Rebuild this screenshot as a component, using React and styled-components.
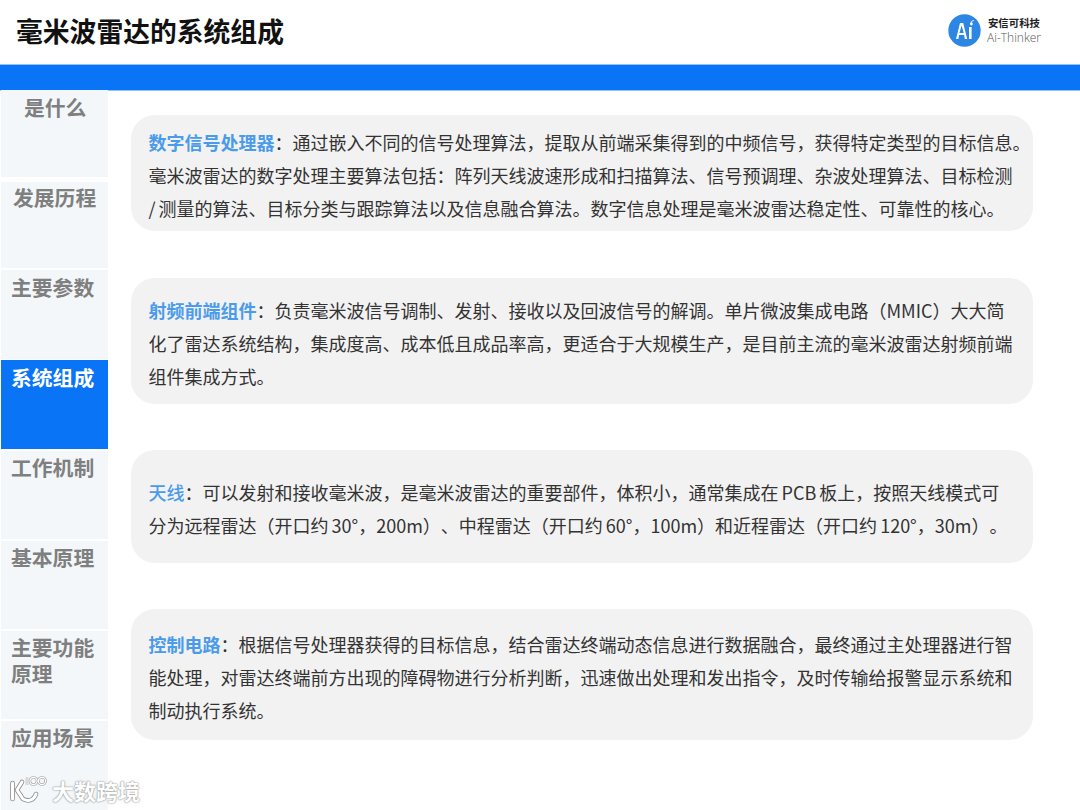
import React from 'react';
import styled, { createGlobalStyle } from 'styled-components';

const GlobalStyle = createGlobalStyle`
  html, body {
    margin: 0;
    padding: 0;
    background: #fff;
    font-family: 'Noto Sans CJK SC', 'Noto Sans', sans-serif;
    text-spacing-trim: space-all;
  }
`;

const Page = styled.div`
  position: relative;
  width: 1080px;
  height: 810px;
  overflow: hidden;
  background: #fff;
`;

const Header = styled.header`
  display: flex;
  align-items: center;
  justify-content: space-between;
  height: 64px;
  padding: 0 39px 3px 16px;
  box-sizing: border-box;
`;

const Title = styled.h1`
  margin: 0;
  font-size: 26.8px;
  font-weight: 700;
  color: #111;
`;

const Brand = styled.div`
  display: flex;
  align-items: center;
  gap: 6px;
`;

const BrandText = styled.div`
  display: flex;
  flex-direction: column;
  gap: 2px;
`;

const BrandName = styled.span`
  margin-left: 1px;
  font-size: 10.4px;
  line-height: 13px;
  font-weight: 700;
  color: #222;
`;

const BrandLatin = styled.span`
  font-family: 'Open Sans', sans-serif;
  font-size: 12px;
  line-height: 14px;
  font-weight: 300;
  color: #555;
`;

const BlueBar = styled.div`
  height: 26px;
  background: #0a74f6;
  border-top: 1px solid #8cc4fb;
  box-shadow: 0 1px 0 #8cc4fb;
  box-sizing: border-box;
`;

const Body = styled.div`
  display: flex;
`;

const Sidebar = styled.nav`
  display: flex;
  flex-direction: column;
  gap: 1.8px;
  width: 107px;
  margin-left: 1px;
  flex-shrink: 0;
`;

const Tab = styled.div`
  height: ${(p) => p.$h}px;
  margin-top: ${(p) => p.$mt}px;
  box-sizing: border-box;
  padding-top: ${(p) => p.$pt}px;
  padding-left: ${(p) => p.$pl}px;
  background: ${(p) => (p.$active ? '#0a74f6' : '#f3f7fa')};
  color: ${(p) => (p.$active ? '#fff' : '#7f7f7f')};
  font-size: 20.8px;
  line-height: 26px;
  font-weight: 700;
  white-space: pre-line;
`;

const Content = styled.main`
  display: flex;
  flex-direction: column;
  width: 902px;
  margin: 25px 0 0 23px;
`;

const Card = styled.section`
  display: flex;
  align-items: center;
  height: ${(p) => p.$h}px;
  margin-bottom: ${(p) => p.$gap}px;
  padding: 5px 0 0 17.5px;
  background: #f2f2f2;
  border-radius: 24px;
  box-sizing: border-box;
`;

const Text = styled.p`
  margin: 0;
  font-size: 18px;
  line-height: 33px;
  color: #333;
  white-space: nowrap;
  word-spacing: -1px;
`;

const Lead = styled.span`
  color: #4a9bec;
  font-weight: ${(p) => (p.$plain ? 500 : 700)};
`;

const Watermark = styled.div`
  position: absolute;
  left: 9px;
  bottom: 6px;
  display: flex;
  align-items: center;
  gap: 1px;
`;

const WatermarkText = styled.span`
  font-size: 22px;
  line-height: 28px;
  font-weight: 700;
  color: #fff;
  text-shadow: 0 0 2px #8d8d8d, 0 0 1px #8d8d8d;
`;

const tabs = [
  { label: '是什么', h: 87, mt: 0, pt: 4, pl: 23 },
  { label: '发展历程', h: 86.2, mt: 3.4, pt: 2, pl: 12 },
  { label: '主要参数', h: 88.4, mt: 0, pt: 4, pl: 10 },
  { label: '系统组成', h: 88.4, mt: 0, pt: 4, pl: 10, active: true },
  { label: '工作机制', h: 88.4, mt: 0, pt: 3, pl: 10 },
  { label: '基本原理', h: 88.4, mt: 0, pt: 3, pl: 10 },
  { label: '主要功能\n原理', h: 88.4, mt: 0, pt: 3, pl: 10 },
  { label: '应用场景', h: 88.4, mt: 0, pt: 3, pl: 10 },
];

const cards = [
  {
    h: 116,
    gap: 47,
    lead: '数字信号处理器',
    lines: [
      '：通过嵌入不同的信号处理算法，提取从前端采集得到的中频信号，获得特定类型的目标信息。',
      '毫米波雷达的数字处理主要算法包括：阵列天线波速形成和扫描算法、信号预调理、杂波处理算法、目标检测',
      '/ 测量的算法、目标分类与跟踪算法以及信息融合算法。数字信息处理是毫米波雷达稳定性、可靠性的核心。',
    ],
  },
  {
    h: 126,
    gap: 46,
    lead: '射频前端组件',
    lines: [
      '：负责毫米波信号调制、发射、接收以及回波信号的解调。单片微波集成电路（MMIC）大大简',
      '化了雷达系统结构，集成度高、成本低且成品率高，更适合于大规模生产，是目前主流的毫米波雷达射频前端',
      '组件集成方式。',
    ],
  },
  {
    h: 113,
    gap: 46,
    lead: '天线',
    plain: true,
    lines: [
      '：可以发射和接收毫米波，是毫米波雷达的重要部件，体积小，通常集成在 PCB 板上，按照天线模式可',
      '分为远程雷达（开口约 30°，200m）、中程雷达（开口约 60°，100m）和近程雷达（开口约 120°，30m）。',
    ],
  },
  {
    h: 131,
    gap: 0,
    lead: '控制电路',
    lines: [
      '：根据信号处理器获得的目标信息，结合雷达终端动态信息进行数据融合，最终通过主处理器进行智',
      '能处理，对雷达终端前方出现的障碍物进行分析判断，迅速做出处理和发出指令，及时传输给报警显示系统和',
      '制动执行系统。',
    ],
  },
];

const BrandLogo = () => (
  <svg width="33" height="33" viewBox="0 0 33 33">
    <circle cx="16.5" cy="16.5" r="16.2" fill="#2b86e4" />
    <path d="M8 25 L12 9 H15.2 L19.2 25 H16.8 L16.1 21 H11.1 L10.4 25 Z M11.5 19 H15.7 L13.6 11.5 Z" fill="#fff" />
    <rect x="21" y="13" width="2.6" height="12" fill="#fff" />
    <path d="M23 9.5 A3 3 0 0 1 26 6.5" stroke="#d7e8fb" strokeWidth="1.2" fill="none" />
    <circle cx="23.4" cy="10" r="1.4" fill="#fff" />
  </svg>
);

const WatermarkLogo = () => (
  <svg width="42" height="28" viewBox="0 0 42 28" fill="none">
    <g stroke="#8d8d8d" strokeWidth="4.6" strokeLinecap="round" strokeLinejoin="round">
      <path d="M3.5 7 V23 M13 6 L8 14 L14 23 C20 26 25 24 27 18" />
    </g>
    <g stroke="#fff" strokeWidth="3" strokeLinecap="round" strokeLinejoin="round">
      <path d="M3.5 7 V23 M13 6 L8 14 L14 23 C20 26 25 24 27 18" />
    </g>
    <g stroke="#a0a0a0" strokeWidth="2.4">
      <path d="M18 1.5 V9" />
      <circle cx="24.5" cy="5" r="3.6" />
      <circle cx="33" cy="5" r="3.6" />
    </g>
    <g stroke="#fff" strokeWidth="1.2">
      <path d="M18 1.5 V9" />
      <circle cx="24.5" cy="5" r="3.6" />
      <circle cx="33" cy="5" r="3.6" />
    </g>
  </svg>
);

const App = () => (
  <Page>
    <GlobalStyle />
    <Header>
      <Title>毫米波雷达的系统组成</Title>
      <Brand>
        <BrandLogo />
        <BrandText>
          <BrandName>安信可科技</BrandName>
          <BrandLatin>Ai-Thinker</BrandLatin>
        </BrandText>
      </Brand>
    </Header>
    <BlueBar />
    <Body>
      <Sidebar>
        {tabs.map((tab) => (
          <Tab key={tab.label} $h={tab.h} $mt={tab.mt} $pt={tab.pt} $pl={tab.pl} $active={tab.active}>{tab.label}</Tab>
        ))}
      </Sidebar>
      <Content>
        {cards.map((card) => (
          <Card key={card.lead} $h={card.h} $gap={card.gap}>
            <Text>
              <Lead $plain={card.plain}>{card.lead}</Lead>
              {card.lines.map((line, index) => (
                <React.Fragment key={line}>
                  {index > 0 && <br />}
                  {line}
                </React.Fragment>
              ))}
            </Text>
          </Card>
        ))}
      </Content>
    </Body>
    <Watermark>
      <WatermarkLogo />
      <WatermarkText>大数跨境</WatermarkText>
    </Watermark>
  </Page>
);

export default App;
